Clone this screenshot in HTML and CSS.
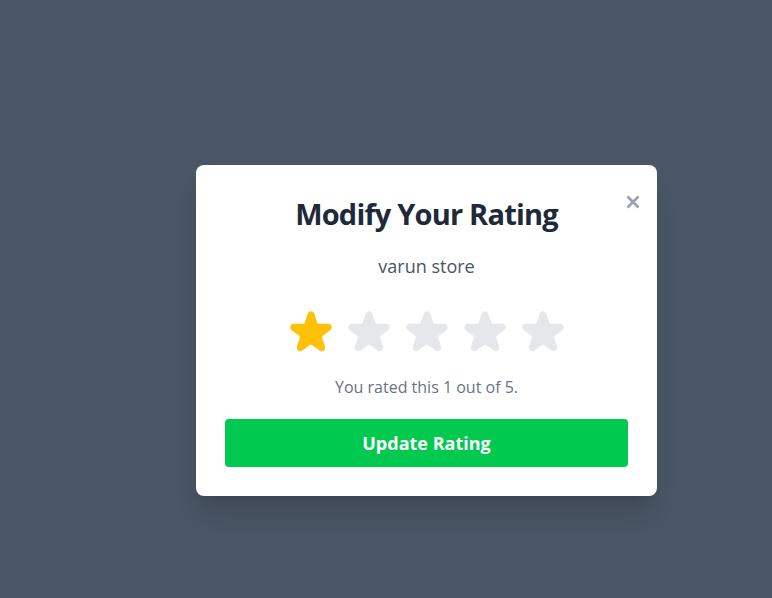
FILE: index.html
```html
<!DOCTYPE html>
<html lang="en">
<head>
<meta charset="utf-8">
<title>Modify Your Rating</title>
<link rel="stylesheet" href="styles.css">
</head>
<body>
<div class="modal">
  <button class="close" aria-label="Close">
    <svg width="14" height="14" viewBox="0 0 14 14"><path d="M1.5 1.5 L12.5 12.5 M12.5 1.5 L1.5 12.5" stroke="currentColor" stroke-width="2.6" fill="none"/></svg>
  </button>
  <h2 class="title">Modify Your Rating</h2>
  <p class="store">varun store</p>
  <div class="stars">
    <svg class="star on" viewBox="0 0 20 20"><path d="M9.049 2.927c.3-.921 1.603-.921 1.902 0l1.07 3.292a1 1 0 00.95.69h3.462c.969 0 1.371 1.24.588 1.81l-2.8 2.034a1 1 0 00-.364 1.118l1.07 3.292c.3.921-.755 1.688-1.54 1.118l-2.8-2.034a1 1 0 00-1.175 0l-2.8 2.034c-.784.57-1.838-.197-1.539-1.118l1.07-3.292a1 1 0 00-.363-1.118l-2.8-2.034c-.783-.57-.38-1.81.588-1.81h3.461a1 1 0 00.951-.69l1.07-3.292z"/></svg>
    <svg class="star" viewBox="0 0 20 20"><path d="M9.049 2.927c.3-.921 1.603-.921 1.902 0l1.07 3.292a1 1 0 00.95.69h3.462c.969 0 1.371 1.24.588 1.81l-2.8 2.034a1 1 0 00-.364 1.118l1.07 3.292c.3.921-.755 1.688-1.54 1.118l-2.8-2.034a1 1 0 00-1.175 0l-2.8 2.034c-.784.57-1.838-.197-1.539-1.118l1.07-3.292a1 1 0 00-.363-1.118l-2.8-2.034c-.783-.57-.38-1.81.588-1.81h3.461a1 1 0 00.951-.69l1.07-3.292z"/></svg>
    <svg class="star" viewBox="0 0 20 20"><path d="M9.049 2.927c.3-.921 1.603-.921 1.902 0l1.07 3.292a1 1 0 00.95.69h3.462c.969 0 1.371 1.24.588 1.81l-2.8 2.034a1 1 0 00-.364 1.118l1.07 3.292c.3.921-.755 1.688-1.54 1.118l-2.8-2.034a1 1 0 00-1.175 0l-2.8 2.034c-.784.57-1.838-.197-1.539-1.118l1.07-3.292a1 1 0 00-.363-1.118l-2.8-2.034c-.783-.57-.38-1.81.588-1.81h3.461a1 1 0 00.951-.69l1.07-3.292z"/></svg>
    <svg class="star" viewBox="0 0 20 20"><path d="M9.049 2.927c.3-.921 1.603-.921 1.902 0l1.07 3.292a1 1 0 00.95.69h3.462c.969 0 1.371 1.24.588 1.81l-2.8 2.034a1 1 0 00-.364 1.118l1.07 3.292c.3.921-.755 1.688-1.54 1.118l-2.8-2.034a1 1 0 00-1.175 0l-2.8 2.034c-.784.57-1.838-.197-1.539-1.118l1.07-3.292a1 1 0 00-.363-1.118l-2.8-2.034c-.783-.57-.38-1.81.588-1.81h3.461a1 1 0 00.951-.69l1.07-3.292z"/></svg>
    <svg class="star" viewBox="0 0 20 20"><path d="M9.049 2.927c.3-.921 1.603-.921 1.902 0l1.07 3.292a1 1 0 00.95.69h3.462c.969 0 1.371 1.24.588 1.81l-2.8 2.034a1 1 0 00-.364 1.118l1.07 3.292c.3.921-.755 1.688-1.54 1.118l-2.8-2.034a1 1 0 00-1.175 0l-2.8 2.034c-.784.57-1.838-.197-1.539-1.118l1.07-3.292a1 1 0 00-.363-1.118l-2.8-2.034c-.783-.57-.38-1.81.588-1.81h3.461a1 1 0 00.951-.69l1.07-3.292z"/></svg>
  </div>
  <p class="rated">You rated this 1 out of 5.</p>
  <button class="update">Update Rating</button>
</div>
</body>
</html>
```

FILE: styles.css
```css
html, body {
  margin: 0;
  height: 100%;
}
body {
  background: #4a5565;
  font-family: "Open Sans", "Noto Sans", sans-serif;
  padding: 165px 0 0 196px;
  box-sizing: border-box;
}
.modal {
  position: relative;
  width: 461px;
  box-sizing: border-box;
  padding: 28px 29px 29px;
  background: #ffffff;
  border-radius: 8px;
  box-shadow: 0 20px 25px -5px rgba(0,0,0,0.12), 0 8px 10px -6px rgba(0,0,0,0.1);
  text-align: center;
}
.close {
  position: absolute;
  top: 30px;
  right: 17px;
  padding: 0;
  border: 0;
  background: none;
  color: #99a1af;
  line-height: 0;
  cursor: pointer;
}
.title {
  margin: 3px 0 0;
  font-size: 29px;
  line-height: 36px;
  font-weight: 700;
  letter-spacing: -0.8px;
  color: #1e2939;
}
.store {
  margin: 20px 0 0;
  font-size: 18px;
  line-height: 28px;
  color: #4a5565;
}
.stars {
  display: flex;
  justify-content: center;
  gap: 4px;
  margin-top: 26px;
}
.star {
  width: 54px;
  height: 54px;
  fill: #e5e7eb;
  stroke: #e5e7eb;
  stroke-width: 0.6;
  stroke-linejoin: round;
}
.star.on {
  fill: #ffc107;
  stroke: #ffc107;
}
.rated {
  margin: 15px 0 0;
  font-size: 16px;
  line-height: 24px;
  color: #6a7282;
}
.update {
  display: block;
  width: 100%;
  height: 48px;
  margin-top: 20px;
  border: 0;
  border-radius: 4px;
  background: #00c950;
  color: #ffffff;
  font-family: inherit;
  font-size: 18px;
  font-weight: 700;
  cursor: pointer;
}
```
